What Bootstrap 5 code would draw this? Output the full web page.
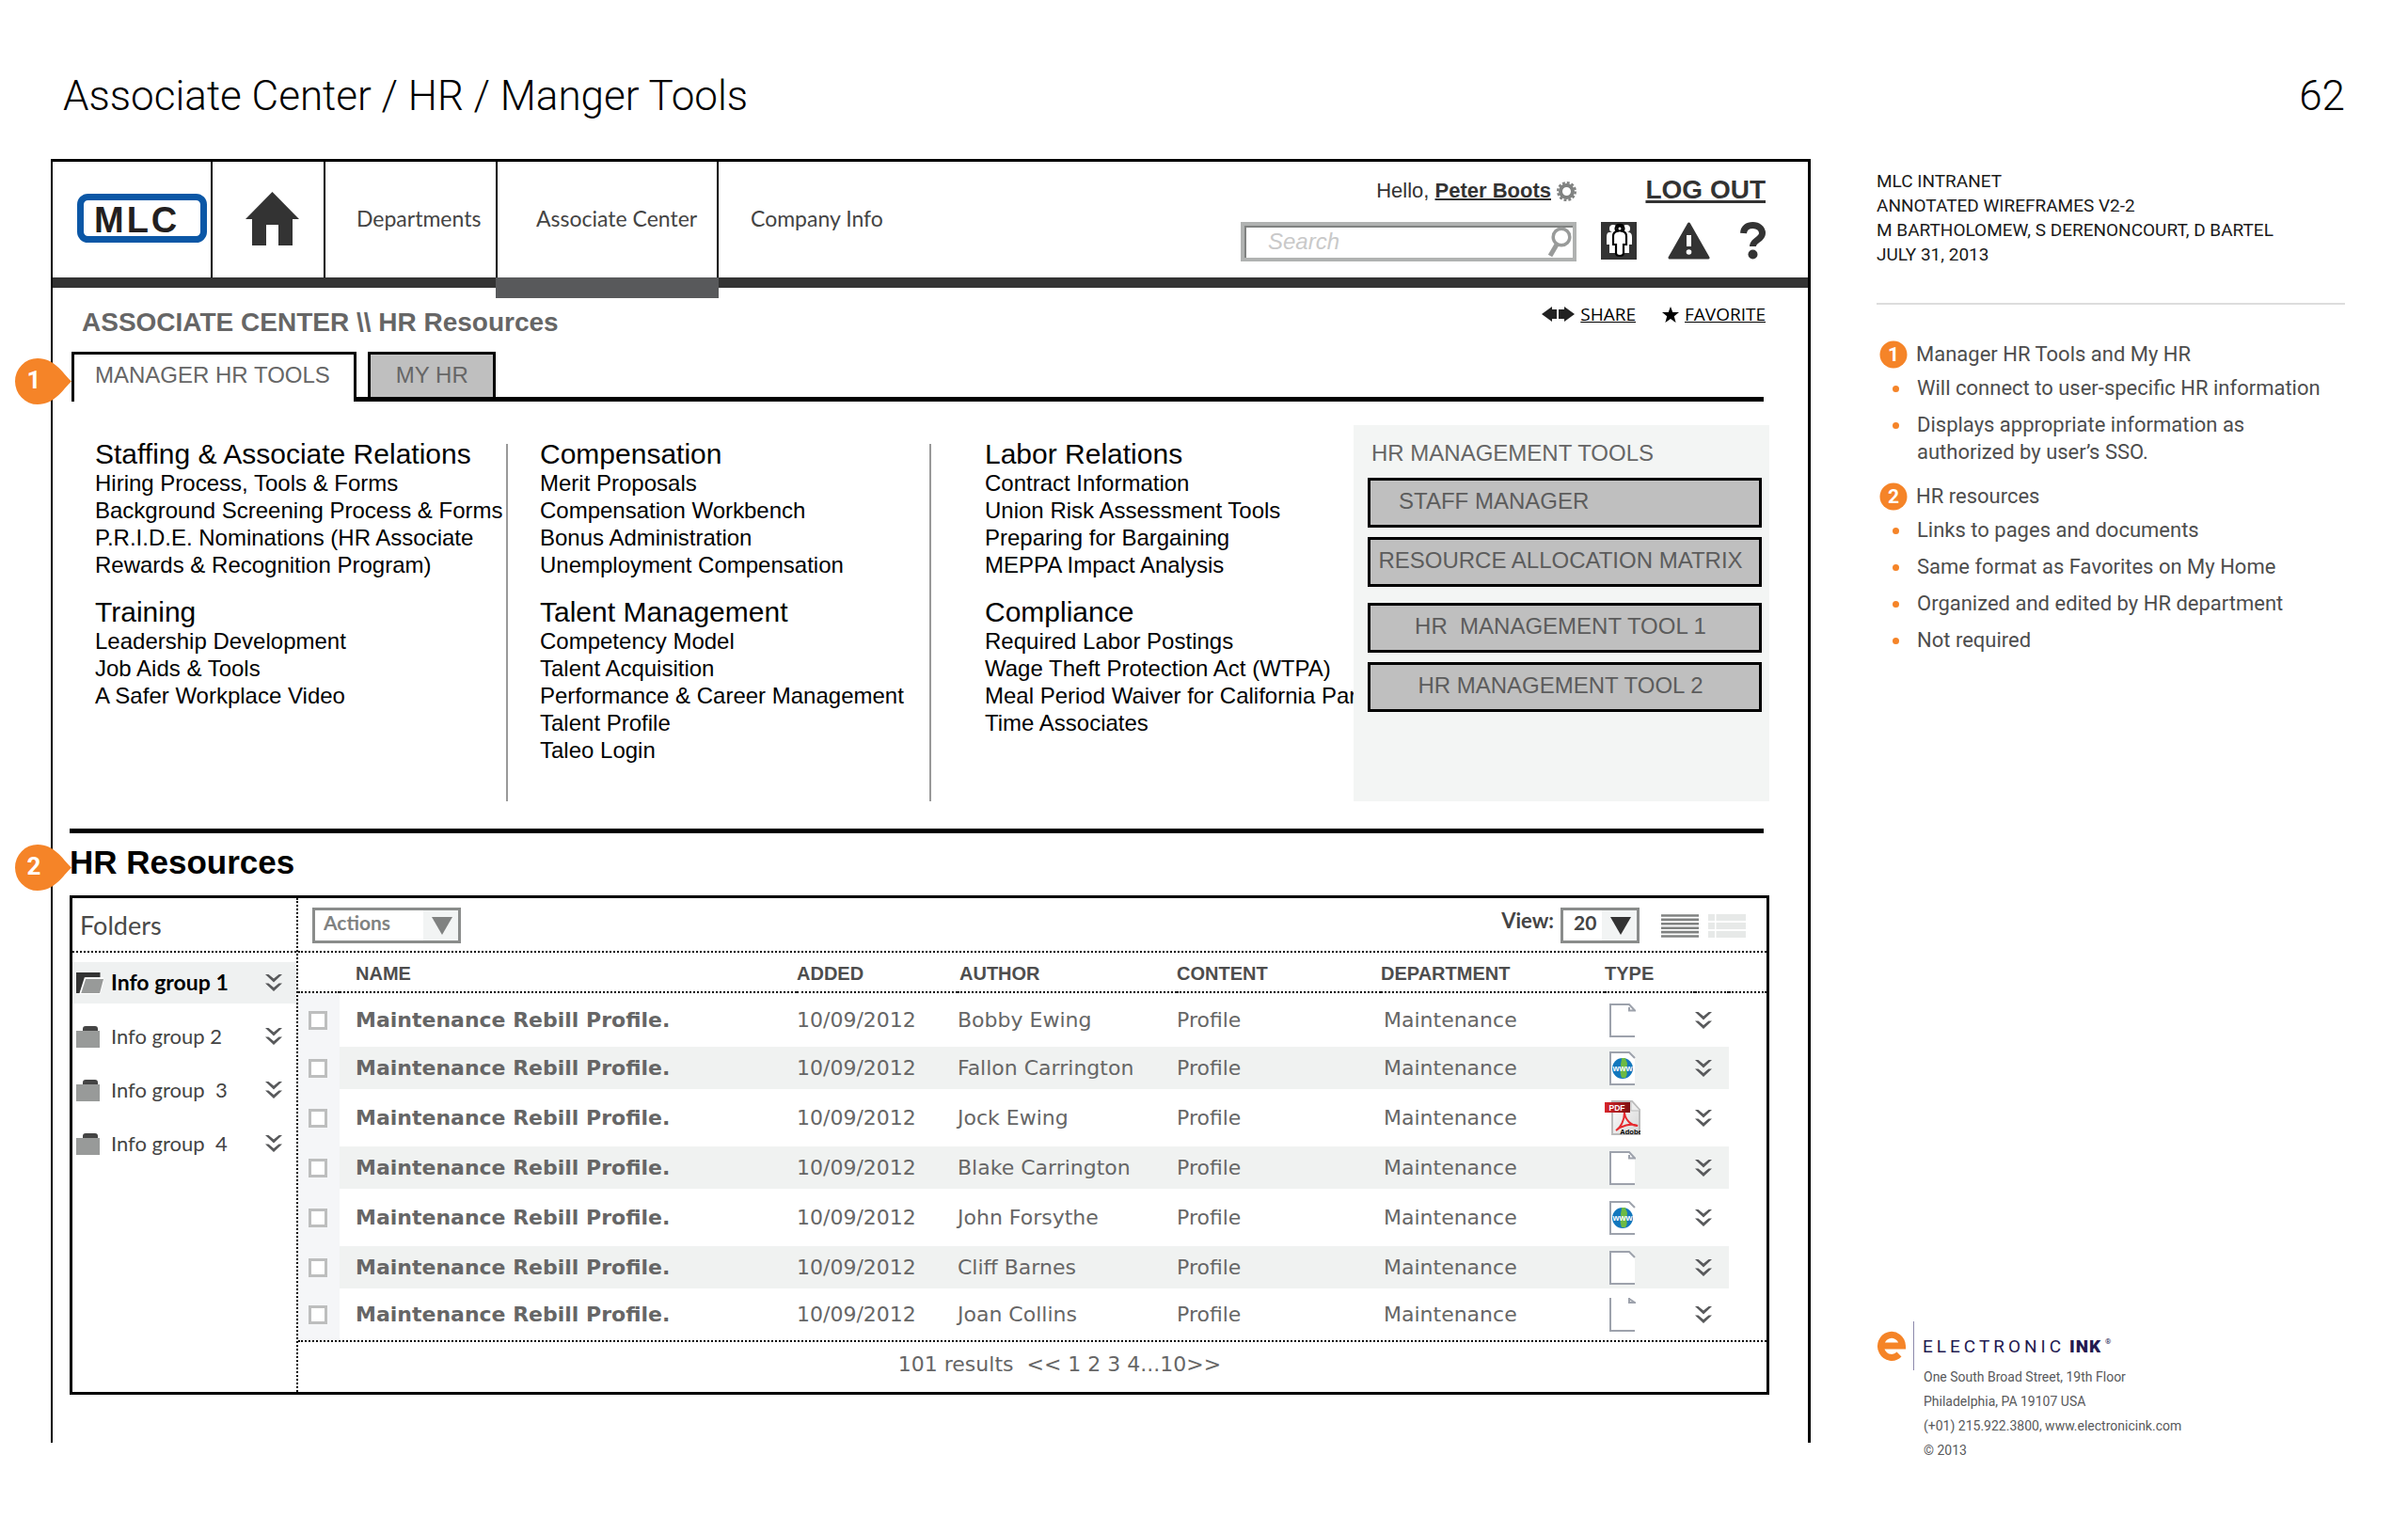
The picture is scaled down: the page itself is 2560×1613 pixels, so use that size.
<!DOCTYPE html>
<html lang="en">
<head>
<meta charset="utf-8">
<meta name="viewport" content="width=device-width, initial-scale=1">
<title>Associate Center / HR / Manger Tools</title>
<link rel="stylesheet" href="https://cdn.jsdelivr.net/npm/bootstrap@5.3.0/dist/css/bootstrap.min.css">
<style>
:root { --orange:#f58428; --ink:#333; --arial:"Liberation Sans", Arial, sans-serif; --humanist:Lato, sans-serif; --din:Roboto, sans-serif; --verdana:"DejaVu Sans", Verdana, sans-serif; }
body { background:#fff; color:#000; font-family:var(--arial); font-size:24px; line-height:29px; }
a { color:inherit; text-decoration:none; }
ul { list-style:none; margin:0; padding:0; }
svg { display:block; flex:none; }
h1,h2,h3,p { margin:0; font-weight:400; }
button { display:block; background:none; border:0; padding:0; color:inherit; }

.page { min-height:100vh; padding:72px 67px 58px 54px; }
.page-head { font-family:var(--din); margin-bottom:37px; padding-left:13px; }
.page-head h1, .page-no { font-size:44px; line-height:60px; font-weight:300; }
.sheet { display:grid; grid-template-columns:minmax(0,1871fr) minmax(0,498fr); column-gap:70px; }

.wire { border:solid #000; border-width:3px 3px 0 2px; padding-bottom:51px; position:relative; }
.topbar { border-bottom:11px solid var(--ink); height:134px; }
.topbar .cell { border-right:2px solid #000; display:flex; align-items:center; padding-bottom:3px; }
.cell-logo { width:170px; padding-left:26px; }
.cell-home { width:120px; padding-left:35px; }
.cell-dep { width:183px; padding-left:33px; }
.cell-assoc { width:235px; padding-left:41px; position:relative; }
.cell-assoc::after { content:""; position:absolute; left:-2px; right:-2px; top:100%; height:22px; background:#58595b; }
.topbar .cell-co { border-right:0; padding-left:34px; }
.menu-link { font-family:var(--humanist); font-size:23px; color:#444; }
.tools { display:grid; grid-template-columns:357px 201px; row-gap:18px; padding:14px 45px 0 0; align-content:start; color:var(--ink); }
.tool-icons { padding-left:26px; }
.hello { font-size:22px; line-height:28px; gap:6px; padding-top:2px; }
.hello a, .logout { font-weight:700; text-decoration:underline; text-decoration-thickness:2px; }
.logout { font-size:28px; line-height:32px; text-decoration-thickness:3px; }
.search { height:42px; border:4px solid #b0b2b1; position:relative; box-shadow:inset 2px 2px 0 #808281; }
.search input { width:100%; height:100%; border:0; background:none; padding:0 40px 0 25px; font-size:24px; font-style:italic; outline:0; }
.search input::placeholder { color:#c9c9c9; opacity:1; }
.search button { position:absolute; right:1px; top:1px; }

.crumb { padding:16px 45px 14px 31px; }
.crumb h2 { font-size:28px; line-height:34px; font-weight:700; color:#666; padding-top:4px; }
.crumb a { font-family:"Open Sans", sans-serif; font-size:19px; line-height:24px; text-decoration:underline; }
.quick { gap:28px; } .quick > span { gap:6px; }
.tabs { margin:0 47px 0 20px; border-bottom:5px solid #000; gap:12px; color:#666; }
.tabs a { border:3px solid #000; border-bottom:0; line-height:28px; }
.tabs a.on { background:#fff; margin-bottom:-5px; padding:8px 25px 14px 22px; }
.tabs a.off { background:#bfbfbf; padding:8px 26px 9px 27px; }

.pin { position:absolute; left:-40px; width:60px; height:49px; }
.pin-a { top:209px; } .pin-b { top:726px; }
.pin text, .dot text { font-family:var(--din); font-weight:700; fill:#fff; }

.lists { display:grid; grid-template-columns:484fr 450fr 449fr 442fr; padding-top:25px; margin-right:41px; }
.list-col { min-width:0; margin-top:20px; min-height:380px; border-right:2px solid #999; }
.list-a { padding-left:45px; } .list-b { padding-left:34px; } .list-c { padding-left:57px; border:0; white-space:nowrap; overflow-x:clip; }
.list-col h3 { font-size:30px; line-height:21px; padding-bottom:6px; white-space:nowrap; }
.list-col ul + h3 { margin-top:25px; }
.panel { background:#f3f5f4; color:#666; padding:16px 8px 0 15px; }
.panel h3 { font-size:24px; line-height:27px; padding:0 0 13px 4px; }
.panel button { display:block; width:100%; height:53px; border:3px solid #000; background:#bfbfbf; color:#5c5c5c; font-size:24px; line-height:28px; padding:0 9px 3px 0; margin-top:10px; }
.panel .first { text-align:left; padding-left:30px; margin-top:0; } .panel .gap-more { margin-top:17px; }

.rule { height:5px; background:#000; margin:29px 47px 0 18px; }
.res-title { font-size:35px; line-height:42px; font-weight:700; margin:10px 0 14px 18px; }
.box { border:3px solid #000; margin:0 41px 0 18px; height:531px; font-family:var(--humanist); }
.folders { width:240px; border-right:2px dotted #000; flex:none; }
.folders h3 { font-size:27px; line-height:32px; color:#4a4a4a; padding:13px 0 0 8px; height:58px; border-bottom:2px dotted #000; }
.folders ul { padding-top:10px; display:flex; flex-direction:column; gap:13px; }
.folders li { height:44px; display:flex; align-items:center; padding:0 15px 0 4px; font-size:22px; color:#444; }
.folders li.on { background:#eff1f1; color:#000; font-weight:700; font-size:23px; }
.folders li a { flex:1; padding:0 0 2px 8px; }
.grid-side { min-width:0; }
.bar { height:58px; border-bottom:2px dotted #000; padding:10px 22px 8px 15px; font-weight:700; font-size:22px; color:#444; display:flex; align-items:flex-start; }
.bar label { line-height:27px; }
.pick { position:relative; height:38px; border:3px solid #8a8c8b; background:#fff; }
.pick::before { content:""; position:absolute; top:0; bottom:0; right:0; width:37px; background:#f2f4f4; }
.pick::after { content:""; position:absolute; right:6px; top:7px; width:22px; height:19px; background:currentColor; clip-path:polygon(0 0,100% 0,50% 100%); pointer-events:none; }
.pick select { position:relative; display:block; appearance:none; border:0; background:none; width:100%; height:28px; padding:0 0 2px 9px; font-weight:700; font-size:21px; line-height:26px; color:inherit; outline:0; }
.pick-act { width:158px; color:#808281; } .pick-view { width:84px; color:var(--ink); margin:0 23px 0 7px; }
.pick-view select { padding-left:11px; color:#444; }
.views { gap:10px; padding-top:7px; }
.files { width:100%; table-layout:fixed; border-collapse:separate; border-spacing:0; font-family:var(--verdana); font-size:22px; color:#666; }
.files th { font-family:var(--arial); font-size:20px; font-weight:700; color:#4d4d4d; height:43px; padding:2px 0 0; border-bottom:2px dotted #000; vertical-align:middle; line-height:26px; }
.files td { padding:0; vertical-align:middle; height:61px; line-height:26px; white-space:nowrap; }
.files tbody tr:first-child td { height:57px; }
.files tbody tr:last-child td { height:55px; }
.files .alt td { height:45px; background:#f0f2f1; }
.files td:first-child, .files .alt td:first-child { background:#f5f6f8; padding-left:11px; }
.files .alt td:last-child { background:none; }
.files .nm { padding-left:17px; } .files td.nm { font-weight:700; }
.files th.au { padding-left:2px; }
.files td.dp { padding-left:3px; } .files td.ty svg { margin-left:5px; } .files td.ty svg.pdf { margin-left:0; }
.files input { appearance:none; display:block; width:20px; height:20px; margin:0; border:3px solid #bdbebe; background:#fff; }
.pager { border-top:2px dotted #000; padding:10px 0 0 58px; text-align:center; font-family:var(--verdana); font-size:22px; line-height:28px; color:#666; }

.notes { font-family:var(--din); color:#4d4d4d; font-size:22px; }
.meta { font-size:19px; line-height:26px; color:#1a1a1a; padding:11px 0 38px; border-bottom:2px solid #ddd; }
.notes h3 { font-size:22px; line-height:30px; display:flex; gap:9px; padding:8px 0 6px 3px; }
.notes .meta + h3 { padding-top:38px; }
.notes li { padding-left:43px; margin-bottom:10px; position:relative; }
.notes li::before { content:""; position:absolute; left:17px; top:12px; width:7px; height:7px; border-radius:50%; background:var(--orange); }
.notes footer svg { margin-bottom:-6px; }
.addr { font-size:14px; line-height:26px; color:#58595b; padding-left:50px; }
</style>
<script src="https://cdn.jsdelivr.net/npm/bootstrap@5.3.0/dist/js/bootstrap.bundle.min.js"></script>
</head>
<body>
<svg width="0" height="0" class="position-absolute" aria-hidden="true">
  <defs>
    <linearGradient id="red" x1="0" x2="1"><stop offset="0" stop-color="#d9252a"/><stop offset="1" stop-color="#7c0d10"/></linearGradient>
    <linearGradient id="paper" x1="0" x2="1" y1="0" y2="1"><stop offset="0" stop-color="#fff"/><stop offset="1" stop-color="#d5d5d5"/></linearGradient>
    <symbol id="chev" viewBox="0 0 18 18"><path d="M0 0h3.500l5.500 4.500 5.500-4.500H18L9 8.500zM0 9.500h3.500L9 14l5.500-4.500H18L9 18z" fill="#58595b"/></symbol>
    <symbol id="doc" viewBox="0 0 28 36"><path d="M1 1h20l6 7v27H1z" fill="#fff"/><path d="M27 35H1V1h20l6 6.500h-6V4" fill="none" stroke="#9da2ac" stroke-width="2"/></symbol>
    <symbol id="doc-plain" viewBox="0 0 28 36"><path d="M1 1h20l6 6v28H1z" fill="#fff"/><path d="M27 35H1V1h20l6 6" fill="none" stroke="#9da2ac" stroke-width="2"/></symbol>
    <symbol id="doc-cut" viewBox="0 0 28 36"><path d="M1 0v35h26M21 0v5h6l-6-4" fill="none" stroke="#9da2ac" stroke-width="2"/></symbol>
    <symbol id="web" viewBox="0 0 28 36"><path d="M1 1h20l6 6v28H1z" fill="#fff"/><path d="M27 35H1V1h20l6 6" fill="none" stroke="#9da2ac" stroke-width="2"/><circle cx="14" cy="18" r="11" fill="#1277bd"/><path d="M13 7h4c0 2 2 4 2 6 0 3-2 4-1 7s1 5-1 8h-4c-1-3-2-6-1-9s0-3 0-5 1-4 1-7z" fill="#6dba44"/><text x="14" y="21" font-size="9" font-weight="700" text-anchor="middle" fill="#fff" font-family="Liberation Sans, sans-serif">www</text></symbol>
    <symbol id="pdf" viewBox="0 0 38 38"><path d="M8 1h21l8 9v26H8z" fill="url(#paper)" stroke="#bbb" stroke-width="2"/><path d="M28 1v10h9" fill="#eee" stroke="#bbb"/><path d="M0 2h27v11H0z" fill="url(#red)"/><text x="13" y="10.500" font-size="8.500" font-weight="700" text-anchor="middle" fill="#fff" font-family="Liberation Sans, sans-serif">PDF</text><path d="M21 13c1 8 7 14 14 14-8-3-17 0-23 5 5-3 9-11 9-19z" fill="none" stroke="#e6282d" stroke-width="2"/><text x="28" y="35.500" font-size="7.500" font-weight="700" text-anchor="middle" font-family="Liberation Sans, sans-serif">Adobe</text></symbol>
    <symbol id="folder" viewBox="0 0 25 23"><path d="M7 6V3q0-3 3-3h10q3 0 3 3v3z" fill="#444"/><path d="M0 5h25v18H0z" fill="#989a99"/></symbol>
  </defs>
</svg>

<div class="page d-flex flex-column">
  <header class="page-head d-flex justify-content-between">
    <h1>Associate Center / HR / Manger Tools</h1>
    <div class="page-no">62</div>
  </header>

  <div class="sheet flex-grow-1">
    <main class="wire align-self-start">
      <nav class="topbar d-flex" aria-label="Main">
        <a href="#" class="cell cell-logo">
          <svg width="138" height="52" viewBox="0 0 138 52" role="img" aria-label="MLC"><rect x="3.500" y="3.500" width="131" height="45" rx="8" fill="#fff" stroke="#0b57a6" stroke-width="7"/><text x="18" y="41" font-family="Liberation Sans, Arial, sans-serif" font-size="38" font-weight="700" fill="#231f20" letter-spacing="3">MLC</text></svg>
        </a>
        <a href="#" class="cell cell-home" aria-label="Home">
          <svg width="57" height="57" viewBox="0 0 57 57"><path d="M28.500 0L57 29h-7v28H35V35H22v22H7V29H0z" fill="#333"/></svg>
        </a>
        <a href="#" class="cell cell-dep menu-link">Departments</a>
        <a href="#" class="cell cell-assoc menu-link" aria-current="page">Associate Center</a>
        <a href="#" class="cell cell-co menu-link">Company Info</a>
        <div class="tools ms-auto">
          <div class="hello d-flex justify-content-end align-items-center">
            <span>Hello, <a href="#">Peter Boots</a></span>
            <button type="button" aria-label="Settings"><svg width="21" height="21" viewBox="0 0 21 21"><circle cx="10.500" cy="10.500" r="6.500" fill="none" stroke="#808281" stroke-width="4"/><circle cx="10.500" cy="10.500" r="9.300" fill="none" stroke="#808281" stroke-width="2.400" stroke-dasharray="2.900 1.970"/></svg></button>
          </div>
          <a href="#" class="logout text-end">LOG OUT</a>
          <form class="search">
            <input type="search" placeholder="Search" aria-label="Search">
            <button type="button" aria-label="Go"><svg width="26" height="33" viewBox="0 0 26 33"><circle cx="15" cy="11" r="8.800" fill="none" stroke="#999b9a" stroke-width="3.500"/><path d="M10 19L3 31" stroke="#999b9a" stroke-width="5"/></svg></button>
          </form>
          <div class="tool-icons d-flex justify-content-between">
            <a href="#" aria-label="People"><svg width="38" height="40" viewBox="0 0 38 40"><path d="M0 0h38v40H0z" fill="#333"/><g fill="#fff"><circle cx="13" cy="7" r="4"/><circle cx="27" cy="7" r="4"/><path d="M9 11h20q4 0 4 5v8h-3v9H9v-9H6v-8q0-5 3-5z"/></g><path d="M20 3a4 4 0 0 1 3 7q4 1 4 5v9h-3v9q0 3-4 3t-4-3v-9h-3v-9q0-4 4-5a4 4 0 0 1 3-7z" fill="#fff" stroke="#000" stroke-width="2.200"/><circle cx="20" cy="7" r="2.500" fill="#fff" stroke="#000" stroke-width="2"/></svg></a>
            <a href="#" aria-label="Alerts"><svg width="45" height="40" viewBox="0 0 45 40"><path d="M22.500 2L43 38H2z" fill="#333" stroke="#333" stroke-width="3" stroke-linejoin="round"/><path d="M20 14h5v12h-5z" fill="#fff"/><circle cx="22.500" cy="32" r="2.800" fill="#fff"/></svg></a>
            <a href="#" aria-label="Help"><svg width="27" height="40" viewBox="0 0 27 40"><path d="M3.500 12C4 6 8 3.500 13.500 3.500S23.500 7 23.500 12c0 7-10 7-10 14" fill="none" stroke="#333" stroke-width="7"/><circle cx="13.500" cy="34.500" r="5" fill="#333"/></svg></a>
          </div>
        </div>
      </nav>

      <div class="crumb d-flex justify-content-between">
        <h2>ASSOCIATE CENTER \\ HR Resources</h2>
        <div class="quick d-flex align-self-start">
          <span class="d-flex align-items-center"><svg width="35" height="16" viewBox="0 0 35 16"><path d="M0 8l11-8v3h5v10h-5v3zM35 8L24 0v3h-6v10h6v3z" fill="#222"/></svg><a href="#">SHARE</a></span>
          <span class="d-flex align-items-center"><svg width="18" height="17" viewBox="0 0 18 17"><path d="M9 0l2.300 6H18l-5.200 4.200L14.600 17 9 13l-5.600 4 1.800-6.800L0 6h6.700z"/></svg><a href="#">FAVORITE</a></span>
        </div>
      </div>

      <div class="tabs d-flex">
        <a href="#" class="on">MANAGER HR TOOLS</a>
        <a href="#" class="off">MY HR</a>
      </div>

      <section class="lists">
        <div class="list-col list-a">
          <h3>Staffing &amp; Associate Relations</h3>
          <ul><li><a href="#">Hiring Process, Tools &amp; Forms</a></li><li><a href="#">Background Screening Process &amp; Forms</a></li><li><a href="#">P.R.I.D.E. Nominations (HR Associate Rewards &amp; Recognition Program)</a></li></ul>
          <h3>Training</h3>
          <ul><li><a href="#">Leadership Development</a></li><li><a href="#">Job Aids &amp; Tools</a></li><li><a href="#">A Safer Workplace Video</a></li></ul>
        </div>
        <div class="list-col list-b">
          <h3>Compensation</h3>
          <ul><li><a href="#">Merit Proposals</a></li><li><a href="#">Compensation Workbench</a></li><li><a href="#">Bonus Administration</a></li><li><a href="#">Unemployment Compensation</a></li></ul>
          <h3>Talent Management</h3>
          <ul><li><a href="#">Competency Model</a></li><li><a href="#">Talent Acquisition</a></li><li><a href="#">Performance &amp; Career Management</a></li><li><a href="#">Talent Profile</a></li><li><a href="#">Taleo Login</a></li></ul>
        </div>
        <div class="list-col list-c">
          <h3>Labor Relations</h3>
          <ul><li><a href="#">Contract Information</a></li><li><a href="#">Union Risk Assessment Tools</a></li><li><a href="#">Preparing for Bargaining</a></li><li><a href="#">MEPPA Impact Analysis</a></li></ul>
          <h3>Compliance</h3>
          <ul><li><a href="#">Required Labor Postings</a></li><li><a href="#">Wage Theft Protection Act (WTPA)</a></li><li><a href="#">Meal Period Waiver for California Part<br>Time Associates</a></li></ul>
        </div>
        <div class="panel">
          <h3>HR MANAGEMENT TOOLS</h3>
          <button type="button" class="first">STAFF MANAGER</button>
          <button type="button">RESOURCE ALLOCATION MATRIX</button>
          <button type="button" class="gap-more">HR&nbsp; MANAGEMENT TOOL 1</button>
          <button type="button">HR MANAGEMENT TOOL 2</button>
        </div>
      </section>

      <div class="rule"></div>
      <h2 class="res-title">HR Resources</h2>

      <section class="box d-flex">
        <div class="folders">
          <h3>Folders</h3>
          <ul>
            <li class="on"><svg width="29" height="25" viewBox="0 0 33 26"><path d="M0 25V0h29v6H10L4 25z" fill="#333"/><path d="M11 6h24l-6 20H4z" fill="#fff"/><path d="M11.500 8H33l-4.500 17H6z" fill="#989a99"/></svg><a href="#">Info group 1</a><button type="button" aria-label="Expand"><svg width="18" height="18"><use href="#chev"/></svg></button></li>
            <li><svg width="25" height="23" class="me-1"><use href="#folder"/></svg><a href="#">Info group 2</a><button type="button" aria-label="Expand"><svg width="18" height="18"><use href="#chev"/></svg></button></li>
            <li><svg width="25" height="23" class="me-1"><use href="#folder"/></svg><a href="#">Info group&nbsp; 3</a><button type="button" aria-label="Expand"><svg width="18" height="18"><use href="#chev"/></svg></button></li>
            <li><svg width="25" height="23" class="me-1"><use href="#folder"/></svg><a href="#">Info group&nbsp; 4</a><button type="button" aria-label="Expand"><svg width="18" height="18"><use href="#chev"/></svg></button></li>
          </ul>
        </div>
        <div class="grid-side flex-grow-1">
          <div class="bar">
            <div class="pick pick-act"><select aria-label="Actions"><option>Actions</option></select></div>
            <label for="view" class="ms-auto">View:</label>
            <div class="pick pick-view"><select id="view"><option>20</option></select></div>
            <div class="views d-flex">
              <button type="button" aria-label="List view"><svg width="40" height="25" viewBox="0 0 40 25"><path d="M0 1.500h40M0 5.900h40M0 10.300h40M0 14.700h40M0 19.100h40M0 23.500h40" stroke="#808281" stroke-width="2.600"/></svg></button>
              <button type="button" aria-label="Detail view"><svg width="40" height="25" viewBox="0 0 40 25"><path d="M0 0h7v7H0zM8.500 0H40v7H8.500zM0 9h7v7H0zM8.500 9H40v7H8.500zM0 18h7v7H0zM8.500 18H40v7H8.500z" fill="#e7e9e8"/></svg></button>
            </div>
          </div>
          <table class="files">
            <colgroup><col style="width:44px"><col><col style="width:171px"><col style="width:233px"><col style="width:217px"><col style="width:238px"><col style="width:96px"><col style="width:36px"><col style="width:40px"></colgroup>
            <thead><tr><th></th><th class="nm">NAME</th><th>ADDED</th><th class="au">AUTHOR</th><th>CONTENT</th><th>DEPARTMENT</th><th>TYPE</th><th></th><th></th></tr></thead>
            <tbody>
              <tr><td><input type="checkbox" aria-label="Select row 1"></td><td class="nm">Maintenance Rebill Profile.</td><td>10/09/2012</td><td>Bobby Ewing</td><td>Profile</td><td class="dp">Maintenance</td><td class="ty"><svg width="28" height="36"><use href="#doc"/></svg></td><td><button type="button" aria-label="Expand"><svg width="18" height="18"><use href="#chev"/></svg></button></td><td></td></tr>
              <tr class="alt"><td><input type="checkbox" aria-label="Select row 2"></td><td class="nm">Maintenance Rebill Profile.</td><td>10/09/2012</td><td>Fallon Carrington</td><td>Profile</td><td class="dp">Maintenance</td><td class="ty"><svg width="28" height="36"><use href="#web"/></svg></td><td><button type="button" aria-label="Expand"><svg width="18" height="18"><use href="#chev"/></svg></button></td><td></td></tr>
              <tr><td><input type="checkbox" aria-label="Select row 3"></td><td class="nm">Maintenance Rebill Profile.</td><td>10/09/2012</td><td>Jock Ewing</td><td>Profile</td><td class="dp">Maintenance</td><td class="ty"><svg width="38" height="38" class="pdf"><use href="#pdf"/></svg></td><td><button type="button" aria-label="Expand"><svg width="18" height="18"><use href="#chev"/></svg></button></td><td></td></tr>
              <tr class="alt"><td><input type="checkbox" aria-label="Select row 4"></td><td class="nm">Maintenance Rebill Profile.</td><td>10/09/2012</td><td>Blake Carrington</td><td>Profile</td><td class="dp">Maintenance</td><td class="ty"><svg width="28" height="36"><use href="#doc"/></svg></td><td><button type="button" aria-label="Expand"><svg width="18" height="18"><use href="#chev"/></svg></button></td><td></td></tr>
              <tr><td><input type="checkbox" aria-label="Select row 5"></td><td class="nm">Maintenance Rebill Profile.</td><td>10/09/2012</td><td>John Forsythe</td><td>Profile</td><td class="dp">Maintenance</td><td class="ty"><svg width="28" height="36"><use href="#web"/></svg></td><td><button type="button" aria-label="Expand"><svg width="18" height="18"><use href="#chev"/></svg></button></td><td></td></tr>
              <tr class="alt"><td><input type="checkbox" aria-label="Select row 6"></td><td class="nm">Maintenance Rebill Profile.</td><td>10/09/2012</td><td>Cliff Barnes</td><td>Profile</td><td class="dp">Maintenance</td><td class="ty"><svg width="28" height="36"><use href="#doc-plain"/></svg></td><td><button type="button" aria-label="Expand"><svg width="18" height="18"><use href="#chev"/></svg></button></td><td></td></tr>
              <tr><td><input type="checkbox" aria-label="Select row 7"></td><td class="nm">Maintenance Rebill Profile.</td><td>10/09/2012</td><td>Joan Collins</td><td>Profile</td><td class="dp">Maintenance</td><td class="ty"><svg width="28" height="36"><use href="#doc-cut"/></svg></td><td><button type="button" aria-label="Expand"><svg width="18" height="18"><use href="#chev"/></svg></button></td><td></td></tr>
            </tbody>
          </table>
          <div class="pager">101 results&nbsp; <a href="#">&lt;&lt;</a> <a href="#">1</a> <a href="#">2</a> <a href="#">3</a> <a href="#">4</a>...<a href="#">10</a><a href="#">&gt;&gt;</a></div>
        </div>
      </section>

      <svg class="pin pin-a" viewBox="0 0 60 49"><path d="M60 24.500C50 34 42 49 24 49a24 24.500 0 0 1 0-49c18 0 26 15 36 24.500z" fill="#f58428"/><text x="20" y="32" font-size="26" text-anchor="middle">1</text></svg>
      <svg class="pin pin-b" viewBox="0 0 60 49"><path d="M60 24.500C50 34 42 49 24 49a24 24.500 0 0 1 0-49c18 0 26 15 36 24.500z" fill="#f58428"/><text x="20" y="32" font-size="26" text-anchor="middle">2</text></svg>
    </main>

    <aside class="notes d-flex flex-column">
      <div class="meta">MLC INTRANET<br>ANNOTATED WIREFRAMES V2-2<br>M BARTHOLOMEW, S DERENONCOURT, D BARTEL<br>JULY 31, 2013</div>
      <h3><svg class="dot" width="30" height="30"><circle cx="15" cy="15" r="14.500" fill="#f58428"/><text x="15" y="22" font-size="21" text-anchor="middle">1</text></svg>Manager HR Tools and My HR</h3>
      <ul>
        <li>Will connect to user-specific HR information</li>
        <li>Displays appropriate information as<br>authorized by user’s SSO.</li>
      </ul>
      <h3><svg class="dot" width="30" height="30"><circle cx="15" cy="15" r="14.500" fill="#f58428"/><text x="15" y="22" font-size="21" text-anchor="middle">2</text></svg>HR resources</h3>
      <ul>
        <li>Links to pages and documents</li>
        <li>Same format as Favorites on My Home</li>
        <li>Organized and edited by HR department</li>
        <li>Not required</li>
      </ul>
      <footer class="mt-auto">
        <svg width="260" height="52" viewBox="0 0 260 52" role="img" aria-label="Electronic Ink"><path d="M7 26h20.500A11.500 12 0 1 0 24 35" fill="none" stroke="#f58428" stroke-width="7"/><path d="M39.500 0v52" stroke="#8d89ac"/><g font-family="Roboto, sans-serif" font-size="19" fill="#231a50"><text x="49" y="33" letter-spacing="4">ELECTRONIC</text><text x="205" y="33" font-weight="900" letter-spacing="1">INK</text><text x="243" y="24" font-size="8">®</text></g></svg>
        <div class="addr">One South Broad Street, 19th Floor<br>Philadelphia, PA 19107 USA<br>(+01) 215.922.3800, www.electronicink.com<br>© 2013</div>
      </footer>
    </aside>
  </div>
</div>
</body>
</html>
